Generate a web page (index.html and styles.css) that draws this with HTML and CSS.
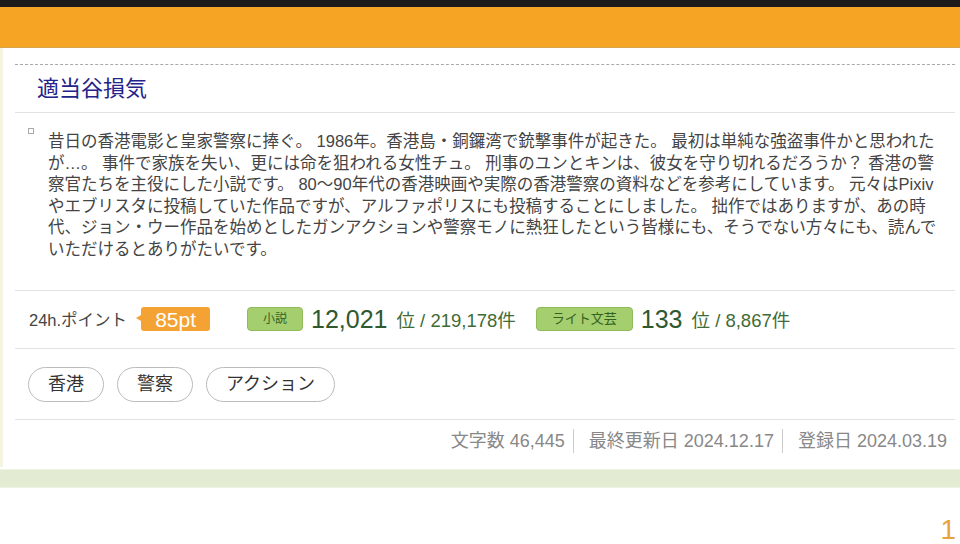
FILE: index.html
```html
<!DOCTYPE html>
<html>
<head>
    <link rel="stylesheet" href="styles.css">
</head>
<body>
    <div class="topbar"></div>
    <div class="header"></div>

    <div class="card">
        <div class="title-row">
            <a class="title" href="#">適当谷損気</a>
        </div>

        <div class="desc">
            <span class="bullet"></span>
            <p>昔日の香港電影と皇家警察に捧ぐ。 1986年。香港島・銅鑼湾で銃撃事件が起きた。 最初は単純な強盗事件かと思われたが…。 事件で家族を失い、更には命を狙われる女性チュ。 刑事のユンとキンは、彼女を守り切れるだろうか？ 香港の警察官たちを主役にした小説です。 80～90年代の香港映画や実際の香港警察の資料などを参考にしています。 元々はPixivやエブリスタに投稿していた作品ですが、アルファポリスにも投稿することにしました。 拙作ではありますが、あの時代、ジョン・ウー作品を始めとしたガンアクションや警察モノに熱狂したという皆様にも、そうでない方々にも、読んでいただけるとありがたいです。</p>
        </div>

        <div class="points">
            <span class="label">24h.ポイント</span>
            <span class="pt">85pt</span>
            <span class="genre">小説</span>
            <span class="rank">12,021</span>
            <span class="total">位 / 219,178件</span>
            <span class="genre wide">ライト文芸</span>
            <span class="rank">133</span>
            <span class="total">位 / 8,867件</span>
        </div>

        <div class="tags">
            <a class="tag" href="#">香港</a>
            <a class="tag" href="#">警察</a>
            <a class="tag" href="#">アクション</a>
        </div>

        <div class="meta">
            <span>文字数 46,445</span>
            <span>最終更新日 2024.12.17</span>
            <span>登録日 2024.03.19</span>
        </div>
    </div>
    <div class="band"></div>

    <div class="pager">
        <span>1</span>
    </div>
</body>
</html>
```

FILE: styles.css
```css
body {
    margin: 0;
    background: #fff;
    font-family: "Liberation Sans", "Noto Sans CJK JP", sans-serif;
    color: #444;
}
a {
    text-decoration: none;
}
.topbar {
    height: 7px;
    background: #1b1b1b;
}
.header {
    height: 40px;
    background: #f5a523;
    border-bottom: 1px solid #d8a54a;
}
.card {
    border-left: 3px solid #f4f4e0;
    padding: 16px 5px 0 12px;
}
.title-row {
    border-top: 1px dashed #aaa;
    border-bottom: 1px solid #e2e2e2;
    padding: 11px 22px 10px;
}
.title {
    font-size: 22px;
    line-height: 26px;
    color: #23238a;
}
.desc {
    display: flex;
    gap: 14px;
    padding: 18px 0 29px 13px;
    border-bottom: 1px solid #e2e2e2;
}
.bullet {
    flex: none;
    width: 4px;
    height: 4px;
    margin-top: -3px;
    border: 1px solid #aaa;
}
.desc p {
    margin: 0;
    width: 895px;
    font-size: 16.5px;
    line-height: 21.6px;
    color: #444;
}
.points {
    display: flex;
    align-items: center;
    height: 57px;
    padding-left: 14px;
    border-bottom: 1px solid #e2e2e2;
}
.label {
    font-size: 16.5px;
    color: #444;
}
.pt {
    position: relative;
    margin: 0 37px 0 14px;
    padding: 0 14px;
    height: 24px;
    line-height: 25px;
    border-radius: 3px;
    background: #f4a233;
    color: #fff;
    font-size: 21px;
}
.pt::before {
    content: "";
    position: absolute;
    left: -5px;
    top: 8px;
    border-top: 3px solid transparent;
    border-bottom: 3px solid transparent;
    border-right: 5px solid #f4a233;
}
.genre {
    padding: 0 15px;
    height: 22px;
    line-height: 22px;
    border: 1px solid #8fbb58;
    border-radius: 4px;
    background: #a5ce6e;
    color: #35621f;
    font-size: 12px;
    margin-right: 8px;
}
.genre.wide {
    padding: 0 15px;
    font-size: 13px;
}
.rank {
    font-size: 25px;
    color: #30592f;
    margin-right: 9px;
}
.total {
    font-size: 18.5px;
    color: #3f6b35;
    margin-right: 20px;
}
.tags {
    display: flex;
    gap: 13px;
    padding: 18px 13px 17px;
    border-bottom: 1px solid #e2e2e2;
}
.tag {
    height: 33px;
    line-height: 33px;
    padding: 0 19px;
    border: 1px solid #bbb;
    border-radius: 18px;
    font-size: 18px;
    color: #333;
}
.meta {
    display: flex;
    justify-content: flex-end;
    padding: 9px 8px 14px;
}
.meta span {
    font-size: 18px;
    line-height: 24px;
    color: #888;
    padding: 0 8px 0 15px;
    border-left: 1px solid #ccc;
}
.meta span:first-child {
    border-left: none;
}
.meta span:last-child {
    padding-right: 0;
}
.band {
    height: 17px;
    margin-top: 2px;
    background: #e3ebd2;
    border-top: 1px solid #eef2e2;
    border-bottom: 1px solid #eef2e2;
}
.pager {
    display: flex;
    justify-content: flex-end;
    padding: 31px 4px 0;
}
.pager span {
    font-size: 28px;
    line-height: 22px;
    color: #e9a33a;
}
```
